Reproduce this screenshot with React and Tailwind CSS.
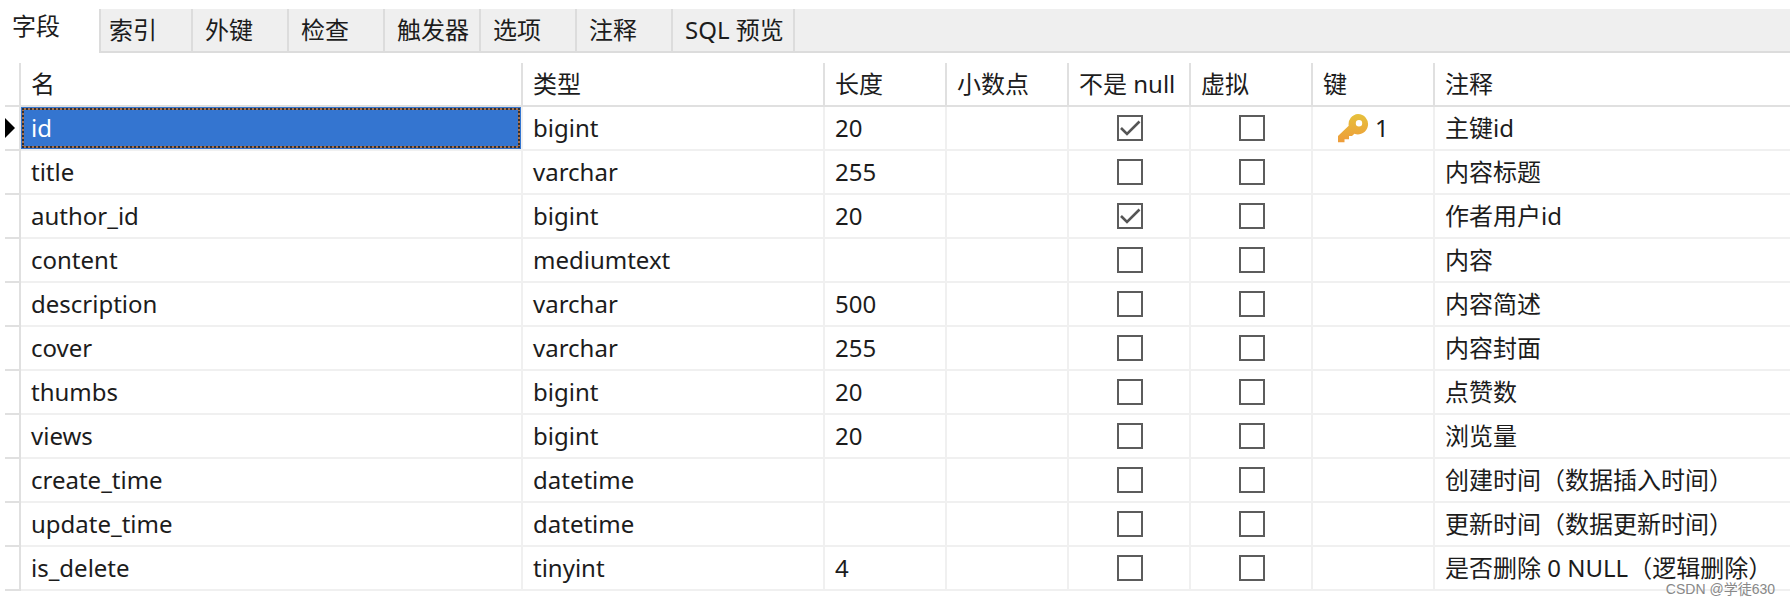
import React from "react";

const tabs = ["索引", "外键", "检查", "触发器", "选项", "注释"];

const columns = ["名", "类型", "长度", "小数点", "不是 null", "虚拟", "键", "注释"];

const fields = [
  { name: "id", type: "bigint", length: "20", notNull: true, key: "1", comment: "主键id" },
  { name: "title", type: "varchar", length: "255", comment: "内容标题" },
  { name: "author_id", type: "bigint", length: "20", notNull: true, comment: "作者用户id" },
  { name: "content", type: "mediumtext", length: "", comment: "内容" },
  { name: "description", type: "varchar", length: "500", comment: "内容简述" },
  { name: "cover", type: "varchar", length: "255", comment: "内容封面" },
  { name: "thumbs", type: "bigint", length: "20", comment: "点赞数" },
  { name: "views", type: "bigint", length: "20", comment: "浏览量" },
  { name: "create_time", type: "datetime", length: "", comment: "创建时间（数据插入时间）" },
  { name: "update_time", type: "datetime", length: "", comment: "更新时间（数据更新时间）" },
  { name: "is_delete", type: "tinyint", length: "4", comment: "是否删除 0 NULL（逻辑删除）" },
];

function KeyIcon() {
  return (
    <svg width="32" height="30" viewBox="0 0 32 30" aria-hidden="true">
      <defs>
        <linearGradient id="gold" x1="0" y1="0" x2="0" y2="1">
          <stop offset="0" stopColor="#e6c13c" />
          <stop offset="1" stopColor="#ee9c3a" />
        </linearGradient>
      </defs>
      <path
        fill="url(#gold)"
        fillRule="evenodd"
        d="M21 1a10.2 10.2 0 1 1-3.6 19.8l-2.4 2.2h-3v3.3H7.5v3H1v-6.3l10.700-10.200A10.2 10.2 0 0 1 21 1ZM22 7a3.200 3.200 0 1 0 0 6.400A3.200 3.200 0 0 0 22 7Z"
      />
    </svg>
  );
}

function CheckBox({ label, checked = false }) {
  return (
    <label className="mx-auto grid size-[26px] place-items-center">
      <input
        type="checkbox"
        aria-label={label}
        defaultChecked={checked}
        className="peer col-start-1 row-start-1 size-[26px] appearance-none border-2 border-[#5c5c5c] bg-white"
      />
      <svg
        viewBox="0 0 26 26"
        className="pointer-events-none invisible col-start-1 row-start-1 size-[26px] peer-checked:visible"
        aria-hidden="true"
      >
        <path d="M4 13l6 6L22.500 6.500" fill="none" stroke="#555" strokeWidth="2.600" />
      </svg>
    </label>
  );
}

function Cell({ children, className = "pl-2.5" }) {
  return (
    <td className={`h-11 border-r-2 border-b-2 border-[#f0f0f0] p-0 last:border-r-0 ${className}`}>
      {children}
    </td>
  );
}

export default function App() {
  return (
    <main className="relative bg-white pt-2 pb-4 font-['Noto_Sans','Noto_Sans_CJK_SC',sans-serif] text-2xl leading-8 text-[#1c1c1c]">
      <nav className="flex h-[45px] whitespace-nowrap" role="tablist">
        <button type="button" role="tab" aria-selected="true" className="w-[99px] pb-2.5 pl-3 text-left">
          字段
        </button>
        <div className="mt-px flex grow border-b-2 border-l-2 border-[#dcdcdc] bg-[#efefef]">
          {tabs.map((tab, i) => (
            <button
              type="button"
              role="tab"
              aria-selected="false"
              key={tab}
              className={`border-r-2 border-[#dcdcdc] text-left ${i === 0 ? "w-[92px] pl-2" : "w-24 pl-3"}`}
            >
              {tab}
            </button>
          ))}
          <button
            type="button"
            role="tab"
            aria-selected="false"
            className="w-[122px] border-r-2 border-[#dcdcdc] pl-3 text-left"
          >
            SQL 预览
          </button>
        </div>
      </nav>

      <div className="pt-2.5 pl-[5px]">
        <table className="w-full table-fixed border-separate border-spacing-0 whitespace-nowrap">
          <colgroup>
            <col className="w-4" />
            <col className="w-[502px]" />
            <col className="w-[302px]" />
            <col className="w-[122px]" />
            <col className="w-[122px]" />
            <col className="w-[122px]" />
            <col className="w-[122px]" />
            <col className="w-[122px]" />
            <col />
          </colgroup>
          <thead>
            <tr>
              <td className="h-11 border-r-2 border-b-2 border-[#e0e0e0] p-0" />
              {columns.map((title, i) => (
                <th
                  key={i}
                  scope="col"
                  className="h-11 border-r-2 border-b-2 border-[#e0e0e0] p-0 pl-2.5 text-left font-normal last:border-r-0"
                >
                  {title}
                </th>
              ))}
            </tr>
          </thead>
          <tbody>
            {fields.map((field, i) => (
              <tr key={field.name}>
                <td className="h-11 border-r-2 border-b-2 border-[#e0e0e0] p-0">
                  {i === 0 && (
                    <svg width="10" height="20" viewBox="0 0 10 20" className="block" aria-hidden="true">
                      <path d="M0 0l10 10L0 20Z" />
                    </svg>
                  )}
                </td>
                {i === 0 ? (
                  <Cell className="pl-0">
                    <div className="h-[42px] bg-[#3475d0] p-px text-white">
                      <div className="h-full border-2 border-dotted border-[#33302f] bg-[#a87150]">
                        <div className="h-full bg-[#3475d0] pl-[7px] leading-9">{field.name}</div>
                      </div>
                    </div>
                  </Cell>
                ) : (
                  <Cell>{field.name}</Cell>
                )}
                <Cell>{field.type}</Cell>
                <Cell>{field.length}</Cell>
                <Cell />
                <Cell className="pl-0.5">
                  <CheckBox label={`${field.name} 不是 null`} checked={field.notNull} />
                </Cell>
                <Cell className="pl-0.5">
                  <CheckBox label={`${field.name} 虚拟`} />
                </Cell>
                <Cell className="pl-6">
                  {field.key && (
                    <span className="flex items-center gap-1.5">
                      <KeyIcon />
                      {field.key}
                    </span>
                  )}
                </Cell>
                <Cell>{field.comment}</Cell>
              </tr>
            ))}
          </tbody>
        </table>
      </div>

      <span className="absolute right-[15px] bottom-2 font-['Liberation_Sans','Noto_Sans_CJK_SC',sans-serif] text-sm text-[#888]">
        CSDN @学徒630
      </span>
    </main>
  );
}
